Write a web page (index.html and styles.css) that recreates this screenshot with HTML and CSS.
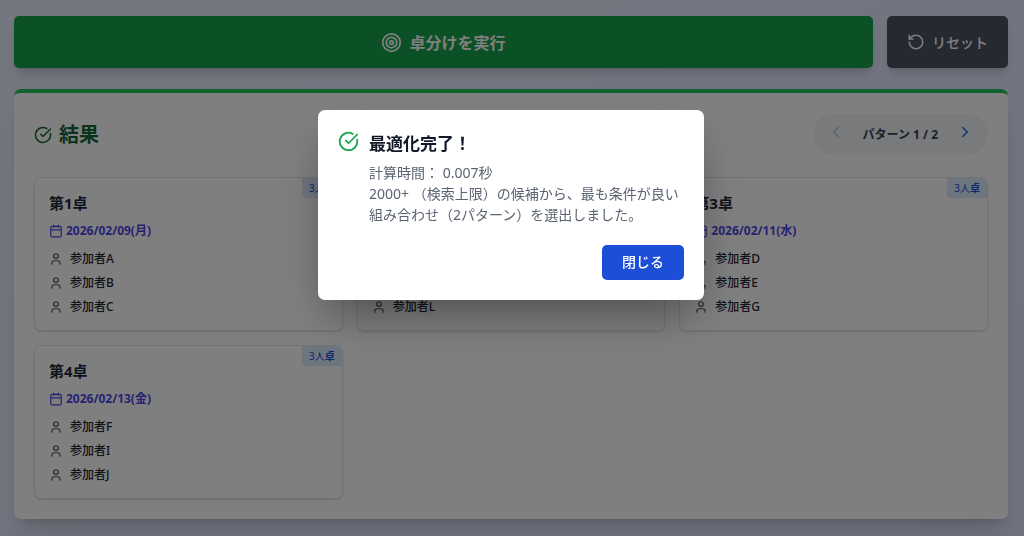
FILE: index.html
```
<!DOCTYPE html>
<html lang="ja">
<head>
  <meta charset="UTF-8">
  <meta name="viewport" content="width=device-width, initial-scale=1.0">
  <title>卓分け</title>
  <link rel="stylesheet" href="styles.css">
</head>
<body>
  <!-- アイコン定義 -->
  <svg class="icon-defs" aria-hidden="true">
    <symbol id="icon-check" viewBox="0 0 24 24"><path d="M21.801 10A10 10 0 1 1 17 3.335"/><path d="m9 11 3 3L22 4"/></symbol>
    <symbol id="icon-target" viewBox="0 0 24 24"><circle cx="12" cy="12" r="10"/><circle cx="12" cy="12" r="6"/><circle cx="12" cy="12" r="2"/></symbol>
    <symbol id="icon-reset" viewBox="0 0 24 24"><path d="M3 12a9 9 0 1 0 9-9 9.75 9.75 0 0 0-6.74 2.74L3 8"/><path d="M3 3v5h5"/></symbol>
    <symbol id="icon-calendar" viewBox="0 0 24 24"><path d="M8 2v4M16 2v4M3 10h18"/><rect x="3" y="4" width="18" height="18" rx="2"/></symbol>
    <symbol id="icon-user" viewBox="0 0 24 24"><path d="M19 21v-2a4 4 0 0 0-4-4H9a4 4 0 0 0-4 4v2"/><circle cx="12" cy="7" r="4"/></symbol>
    <symbol id="icon-prev" viewBox="0 0 24 24"><path d="m15 18-6-6 6-6"/></symbol>
    <symbol id="icon-next" viewBox="0 0 24 24"><path d="m9 18 6-6-6-6"/></symbol>
  </svg>

  <main class="page">
    <div class="actions">
      <button type="button" class="run-button"><svg class="icon icon-lg"><use href="#icon-target"/></svg>卓分けを実行</button>
      <button type="button" class="reset-button"><svg class="icon icon-md"><use href="#icon-reset"/></svg>リセット</button>
    </div>

    <section class="results">
      <div class="results-header">
        <h2><svg class="icon icon-md"><use href="#icon-check"/></svg>結果</h2>
        <div class="pager">
          <button type="button" aria-label="前のパターン" disabled><svg class="icon icon-md"><use href="#icon-prev"/></svg></button>
          <span>パターン 1 / 2</span>
          <button type="button" aria-label="次のパターン"><svg class="icon icon-md"><use href="#icon-next"/></svg></button>
        </div>
      </div>

      <div class="tables">
        <article class="card">
          <span class="badge">3人<b>卓</b></span>
          <h3>第1卓</h3>
          <p class="date"><svg class="icon icon-sm"><use href="#icon-calendar"/></svg>2026/02/09(月)</p>
          <ul>
            <li><svg class="icon icon-sm"><use href="#icon-user"/></svg>参加者A</li>
            <li><svg class="icon icon-sm"><use href="#icon-user"/></svg>参加者B</li>
            <li><svg class="icon icon-sm"><use href="#icon-user"/></svg>参加者C</li>
          </ul>
        </article>
        <article class="card">
          <span class="badge">3人<b>卓</b></span>
          <h3>第2卓</h3>
          <p class="date"><svg class="icon icon-sm"><use href="#icon-calendar"/></svg>2026/02/10(火)</p>
          <ul>
            <li><svg class="icon icon-sm"><use href="#icon-user"/></svg>参加者H</li>
            <li><svg class="icon icon-sm"><use href="#icon-user"/></svg>参加者K</li>
            <li><svg class="icon icon-sm"><use href="#icon-user"/></svg>参加者L</li>
          </ul>
        </article>
        <article class="card">
          <span class="badge">3人<b>卓</b></span>
          <h3>第3卓</h3>
          <p class="date"><svg class="icon icon-sm"><use href="#icon-calendar"/></svg>2026/02/11(水)</p>
          <ul>
            <li><svg class="icon icon-sm"><use href="#icon-user"/></svg>参加者D</li>
            <li><svg class="icon icon-sm"><use href="#icon-user"/></svg>参加者E</li>
            <li><svg class="icon icon-sm"><use href="#icon-user"/></svg>参加者G</li>
          </ul>
        </article>
        <article class="card">
          <span class="badge">3人<b>卓</b></span>
          <h3>第4卓</h3>
          <p class="date"><svg class="icon icon-sm"><use href="#icon-calendar"/></svg>2026/02/13(金)</p>
          <ul>
            <li><svg class="icon icon-sm"><use href="#icon-user"/></svg>参加者F</li>
            <li><svg class="icon icon-sm"><use href="#icon-user"/></svg>参加者I</li>
            <li><svg class="icon icon-sm"><use href="#icon-user"/></svg>参加者J</li>
          </ul>
        </article>
      </div>
    </section>
  </main>

  <!-- 完了ダイアログ -->
  <div class="overlay">
    <div class="dialog" role="dialog" aria-modal="true" aria-labelledby="dialog-title">
      <div class="dialog-body">
        <svg class="icon icon-lg dialog-icon"><use href="#icon-check"/></svg>
        <div>
          <h2 id="dialog-title">最適化完了！</h2>
          <p>計算時間： 0.007秒<br>2000+ （検索上限）の候補から、最も条件が良い組み合わせ（2パターン）を選出しました。</p>
        </div>
      </div>
      <button type="button" class="close-button">閉じる</button>
    </div>
  </div>
</body>
</html>
```
FILE: styles.css
```
* { box-sizing: border-box; }
body {
  margin: 0;
  min-height: 100vh;
  font-family: "Noto Sans", "Noto Sans CJK JP", sans-serif;
  color: #1f2937;
  background: linear-gradient(to bottom right, #e8eeff, #e0e7ff);
}
h2, h3, p, ul { margin: 0; padding: 0; }
button {
  font-family: inherit;
  border: none;
  cursor: pointer;
}
.icon-defs { position: absolute; width: 0; height: 0; }
.icon {
  flex: none;
  fill: none;
  stroke: currentColor;
  stroke-width: 2;
  stroke-linecap: round;
  stroke-linejoin: round;
}
.icon-sm { width: 14px; height: 14px; }
.icon-md { width: 18px; height: 18px; }
.icon-lg { width: 21px; height: 21px; }

.page { padding: 16px 16px 16px 14px; }
.actions {
  display: flex;
  gap: 14px;
  margin-bottom: 21px;
}
.run-button, .reset-button {
  display: flex;
  align-items: center;
  justify-content: center;
  height: 52px;
  color: white;
  border-radius: 5px;
  box-shadow: 0 8px 12px -3px rgba(0, 0, 0, 0.15), 0 3px 5px -3px rgba(0, 0, 0, 0.15);
}
.run-button {
  flex: 1;
  gap: 7px;
  font-size: 16px;
  font-weight: 700;
  background-color: #16a34a;
}
.reset-button {
  gap: 7px;
  padding: 0 20px;
  font-size: 14px;
  font-weight: 500;
  background-color: #4b5563;
}

.results {
  padding: 21px 20px 20px;
  background-color: white;
  border-top: 4px solid #22c55e;
  border-radius: 7px;
  box-shadow: 0 20px 24px -5px rgba(0, 0, 0, 0.12), 0 7px 9px -5px rgba(0, 0, 0, 0.12);
}
.results-header {
  display: flex;
  align-items: center;
  justify-content: space-between;
  margin-bottom: 22px;
}
.results-header h2 {
  display: flex;
  align-items: center;
  gap: 7px;
  font-size: 20px;
  line-height: 28px;
  color: #166534;
}
.pager {
  display: flex;
  align-items: flex-start;
  gap: 11px;
  padding: 7px;
  border-radius: 21px;
  background-color: #f1f5f9;
}
.pager span {
  font-size: 12px;
  font-weight: 700;
  line-height: 27px;
  color: #374151;
}
.pager button {
  display: flex;
  padding: 2px 7px;
  color: #2563eb;
  background: none;
}
.pager button:disabled { color: #6b7280; opacity: 0.4; }

.tables {
  display: grid;
  grid-template-columns: repeat(3, 1fr);
  gap: 14px;
}
.card {
  position: relative;
  padding: 14px 14px 13px;
  border: 1px solid #e5e7eb;
  border-radius: 7px;
  box-shadow: 0 1px 2px rgba(0, 0, 0, 0.15);
}
.card h3 {
  margin-bottom: 9px;
  font-size: 15px;
  line-height: 22px;
}
.badge {
  position: absolute;
  top: 0;
  right: 0;
  padding: 0 7px;
  font-size: 10px;
  line-height: 20px;
  color: #1d4ed8;
  background-color: #dbeafe;
  border-radius: 0 6px 0 4px;
}
.date {
  display: flex;
  align-items: center;
  gap: 3px;
  margin-bottom: 10px;
  font-size: 12px;
  font-weight: 700;
  line-height: 16px;
  color: #4f46e5;
}
.card ul {
  display: grid;
  gap: 4px;
  list-style: none;
}
.card li {
  display: flex;
  align-items: center;
  gap: 7px;
  font-size: 12px;
  font-weight: 500;
  line-height: 20px;
}
.card li .icon { color: #4b5563; }

.overlay {
  position: fixed;
  inset: 0;
  display: flex;
  align-items: flex-start;
  justify-content: center;
  padding: 110px 16px 0 14px;
  background-color: rgba(0, 0, 0, 0.5);
}
.dialog {
  display: flex;
  flex-direction: column;
  gap: 20px;
  width: 100%;
  max-width: 386px;
  padding: 20px;
  background-color: white;
  border-radius: 7px;
  box-shadow: 0 22px 43px -10px rgba(0, 0, 0, 0.4);
}
.dialog-body {
  display: flex;
  gap: 10px;
}
.dialog-icon { margin-top: 1px; color: #16a34a; }
.dialog h2 {
  margin-bottom: 4px;
  font-size: 17px;
  line-height: 28px;
  color: #111827;
}
.dialog p {
  font-size: 14px;
  line-height: 21px;
  color: #5b6472;
}
.close-button {
  align-self: flex-end;
  height: 35px;
  padding: 0 20px 3px;
  font-size: 14px;
  font-weight: 500;
  color: white;
  background-color: #1d4ed8;
  border-radius: 5px;
}
```
